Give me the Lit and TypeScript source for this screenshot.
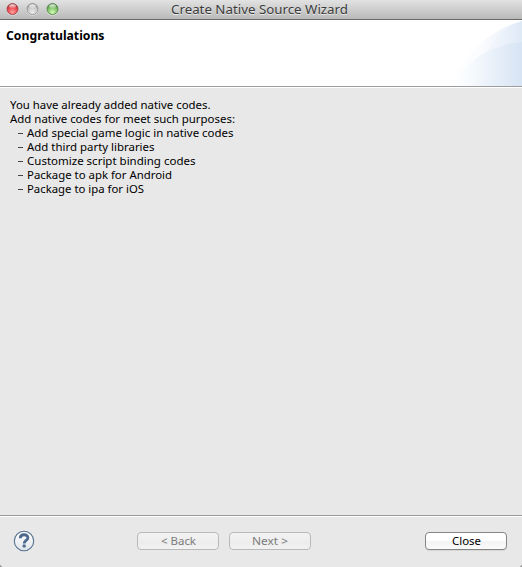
import { LitElement, html, css } from "lit";
import { customElement } from "lit/decorators.js";

interface Line { text: string; width: number; item?: boolean; }

const LINES: Line[] = [
  { text: "You have already added native codes.", width: 200.5 },
  { text: "Add native codes for meet such purposes:", width: 225 },
  { text: "Add special game logic in native codes", width: 206.5, item: true },
  { text: "Add third party libraries", width: 127.5, item: true },
  { text: "Customize script binding codes", width: 168.5, item: true },
  { text: "Package to apk for Android", width: 145, item: true },
  { text: "Package to ipa for iOS", width: 117, item: true },
];

const label = (text: string, width: number, height = 14, base = 11) => html`
  <svg class="label" width=${width} height=${height}>
    <text x="0" y=${base} textLength=${width} lengthAdjust="spacingAndGlyphs">${text}</text>
  </svg>`;

@customElement("app-root")
export class AppRoot extends LitElement {
  static styles = css`
    :host { display: flex; flex-direction: column; width: 522px; height: 567px; box-sizing: border-box;
      background: radial-gradient(circle at 0 100%, #999 1.5px, transparent 2px),
        radial-gradient(circle at 100% 100%, #999 1.5px, transparent 2px), #e8e8e8;
      overflow: hidden; font: 11px/14px "Noto Sans", "Open Sans", sans-serif; color: #000; }
    .label { display: block; overflow: visible; fill: currentColor; flex: none; }
    .titlebar { height: 20px; box-sizing: border-box; display: grid; grid-template-columns: 171px 1fr;
      background: linear-gradient(#e2e2e2, #b9b9b9); border-bottom: 1px solid #686868; flex: none; }
    .lights { display: flex; gap: 7px; padding: 2px 0 0 5.5px; }
    .lights svg { display: block; }
    .title { font-size: 13px; color: #3c3c3c; text-shadow: 0 1px 0 #e8e8e8; }
    .header { height: 66px; background: #fff; display: flex; justify-content: space-between; flex: none; }
    .heading { font-size: 12px; font-weight: 700; padding: 8px 0 0 6px; }
    .rule { height: 2px; box-sizing: border-box; border-top: 1px solid #9c9c9c; background: #fff; flex: none; }
    .content { flex: 1; padding: 10px 10px 0; }
    .row { display: flex; height: 14px; }
    .item { padding-left: 7px; }
    .dash { width: 10px; flex: none; }
    .dash::before { content: ""; display: block; width: 5px; height: 1px; margin: 7px 0 0 1px; background: #444; }
    .footer { height: 50px; box-sizing: border-box; display: flex; align-items: center; padding: 0 15px 2px 13px; flex: none; }
    .help { margin-right: 102px; display: block; }
    .button { width: 82px; height: 18px; box-sizing: border-box; border: 1px solid #858585; border-radius: 4px;
      padding: 0; display: flex; justify-content: center; align-items: center; font: inherit; color: #000;
      background: linear-gradient(#fff 0%, #fff 45%, #f3f3f3 55%, #fbfbfb 100%); box-shadow: 0 1px 0 #d6d6d6; }
    .button:disabled { color: #7c7c7c; border-color: #b9b9b9; background: linear-gradient(#f3f3f3, #eee 50%, #ececec 55%, #f2f2f2);
      box-shadow: none; }
    .next { margin-left: 10px; }
    .close { margin-left: auto; }
  `;

  private light(id: string, edge: string, mid: string, glow: string) {
    return html`<svg width="13" height="14" viewBox="0 0 13 14">
      <defs>
        <radialGradient id=${id} cx=".5" cy=".8" r=".75">
          <stop offset="0" stop-color=${glow} /><stop offset=".65" stop-color=${mid} /><stop offset="1" stop-color=${edge} />
        </radialGradient>
        <linearGradient id="${id}-s" x1="0" y1="0" x2="0" y2="1">
          <stop offset="0" stop-color="#fff" stop-opacity=".9" /><stop offset="1" stop-color="#fff" stop-opacity=".1" />
        </linearGradient>
      </defs>
      <circle cx="6.5" cy="7.8" r="6" fill="#fff" opacity=".45" />
      <circle cx="6.5" cy="7" r="5.5" fill="url(#${id})" stroke=${edge} stroke-width=".8" />
      <ellipse cx="6.5" cy="4.3" rx="3.4" ry="2" fill="url(#${id}-s)" />
    </svg>`;
  }

  render() {
    return html`
      <div class="titlebar">
        <div class="lights">
          ${this.light("red", "#9b363c", "#e8444b", "#ffa3a0")}
          ${this.light("grey", "#8c8c8c", "#c6c6c6", "#ededed")}
          ${this.light("green", "#4b7d40", "#79bd65", "#d3ffb5")}
        </div>
        <div class="title">${label("Create Native Source Wizard", 177, 19, 14)}</div>
      </div>
      <div class="header">
        <div class="heading">${label("Congratulations", 98.5, 16, 12)}</div>
        <svg width="72" height="66" viewBox="0 0 72 66">
          <defs>
            <linearGradient id="back" gradientUnits="userSpaceOnUse" x1="0" x2="72">
              <stop offset="0" stop-color="#fff" /><stop offset=".4" stop-color="#fbfcfe" />
              <stop offset=".7" stop-color="#f1f5fb" /><stop offset="1" stop-color="#e2ebf7" />
            </linearGradient>
            <linearGradient id="front" gradientUnits="userSpaceOnUse" x1="0" x2="72">
              <stop offset="0" stop-color="#fff" /><stop offset=".3" stop-color="#f7fafd" />
              <stop offset=".6" stop-color="#e8f0f9" /><stop offset="1" stop-color="#d7e4f4" />
            </linearGradient>
            <linearGradient id="top" gradientUnits="userSpaceOnUse" x1="36" x2="72">
              <stop offset="0" stop-color="#f5f8fd" /><stop offset="1" stop-color="#dce8f6" />
            </linearGradient>
          </defs>
          <path d="M0 66C12 38 37 10 72 1V66Z" fill="url(#back)" />
          <path d="M36 33C45 17 55 7 72 1V22C58 24 47 27 36 33Z" fill="url(#top)" opacity=".65" />
          <path d="M0 66C14 44 38 25 72 22V66Z" fill="url(#front)" />
        </svg>
      </div>
      <div class="rule"></div>
      <div class="content">
        ${LINES.map((l) => html`<div class="row ${l.item ? "item" : ""}">
          ${l.item ? html`<span class="dash"></span>` : ""}${label(l.text, l.width)}
        </div>`)}
      </div>
      <div class="rule"></div>
      <div class="footer">
        <svg class="help" width="22" height="22" viewBox="0 0 22 22">
          <defs><linearGradient id="disc" x1="0" y1="0" x2="0" y2="1">
            <stop offset="0" stop-color="#fff" /><stop offset="1" stop-color="#e0e4ea" />
          </linearGradient></defs>
          <circle cx="11" cy="11" r="9.7" fill="url(#disc)" stroke="#53708f" stroke-width="1.1" />
          <path d="M7.2 8.2C7.4 3.6 14.9 3.8 14.9 7.7C14.9 10.4 11.2 10.4 11.2 13.4" fill="none" stroke="#4c6a8d" stroke-width="2.8" />
          <rect x="9.7" y="14.6" width="3" height="2.8" rx=".6" fill="#4c6a8d" />
        </svg>
        <button class="button" disabled>${label("< Back", 35)}</button>
        <button class="button next" disabled>${label("Next >", 36)}</button>
        <button class="button close">${label("Close", 29)}</button>
      </div>
    `;
  }
}
